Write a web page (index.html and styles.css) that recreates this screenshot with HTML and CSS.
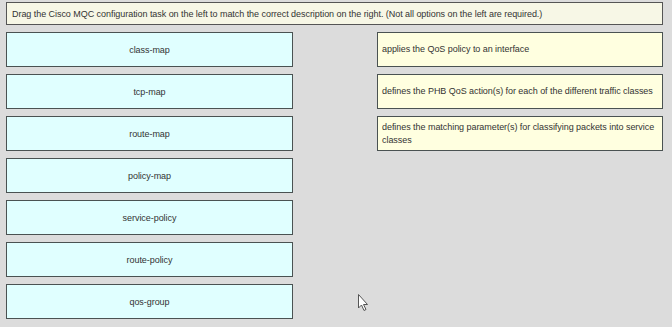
FILE: index.html
```html
<!DOCTYPE html>
<html>
<head>
    <meta charset="utf-8">
    <link rel="stylesheet" href="styles.css">
</head>
<body>
    <div class="page">
        <div class="instructions">
            Drag the Cisco MQC configuration task on the left to match the correct description on the right. (Not all options on the left are required.)
        </div>
        <div class="board">
            <div class="options">
                <div class="option">class-map</div>
                <div class="option">tcp-map</div>
                <div class="option">route-map</div>
                <div class="option">policy-map</div>
                <div class="option">service-policy</div>
                <div class="option">route-policy</div>
                <div class="option">qos-group</div>
            </div>
            <div class="targets">
                <div class="target">applies the QoS policy to an interface</div>
                <div class="target">defines the PHB QoS action(s) for each of the different traffic classes</div>
                <div class="target">defines the matching parameter(s) for classifying packets into service classes</div>
            </div>
        </div>
        <svg class="cursor" width="12" height="18" viewBox="0 0 12 18">
            <path d="M0.5 0.5 L0.5 14 L3.5 11 L6 16.5 L8 15.5 L5.5 10.5 L9.5 10.5 Z" fill="#fff" stroke="#555" stroke-width="1"/>
        </svg>
    </div>
</body>
</html>
```

FILE: styles.css
```css
body {
    margin: 0;
    background-color: #dcdcdc;
    font-family: "Liberation Sans", Arial, sans-serif;
    font-size: 9px;
    letter-spacing: -0.05px;
    color: #333;
}

.page {
    position: relative;
    width: 672px;
    height: 327px;
    padding: 2px 0 0 6px;
    box-sizing: border-box;
}

.instructions {
    width: 657px;
    height: 23px;
    box-sizing: border-box;
    border: 1px solid #555;
    background-color: #f7f7e6;
    padding: 0 5px;
    display: flex;
    align-items: center;
}

.board {
    display: flex;
    gap: 84px;
    margin-top: 7px;
}

.options, .targets {
    display: flex;
    flex-direction: column;
    gap: 7px;
}

.option {
    width: 287px;
    height: 35px;
    box-sizing: border-box;
    border: 1px solid #4a5252;
    background-color: #e0ffff;
    display: flex;
    align-items: center;
    justify-content: center;
}

.target {
    width: 286px;
    height: 35px;
    box-sizing: border-box;
    border: 1px solid #4a5252;
    background-color: #ffffe0;
    padding: 0 4px;
    line-height: 13px;
    display: flex;
    align-items: center;
}

.cursor {
    position: absolute;
    left: 358px;
    top: 294px;
}
```
